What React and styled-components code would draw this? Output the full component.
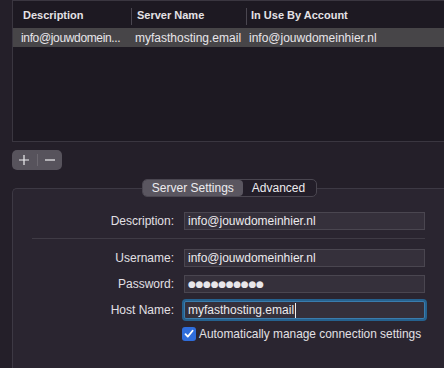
import React from "react"
import styled, { createGlobalStyle } from "styled-components"

const GlobalStyle = createGlobalStyle`
	html, body {
		margin: 0;
		padding: 0;
		background: #241f29;
		font-family: "Liberation Sans", Arial, sans-serif;
		font-size: 12px;
		color: #e2e0e4;
	}
	#root {
		width: 444px;
		height: 368px;
		overflow: hidden;
	}
`

const Page = styled.div`
	height: 368px;
	padding-left: 12px;
	display: flex;
	flex-direction: column;
	box-sizing: border-box;
`

const Table = styled.div`
	height: 142px;
	box-sizing: border-box;
	background: #1d1922;
	border: 1px solid #3a3640;
	border-right: none;
`

const Row = styled.div`
	display: grid;
	grid-template-columns: 118px 115px 1fr;
	height: ${(p) => (p.header ? "27px" : "19px")};
	align-items: center;
	background: ${(p) => (p.selected ? "#474548" : "transparent")};
	font-size: ${(p) => (p.header ? "11px" : "12px")};
	font-weight: ${(p) => (p.header ? "bold" : "normal")};
`

const Cell = styled.div`
	position: relative;
	padding-left: ${(p) => p.pad}px;
	white-space: nowrap;
	letter-spacing: ${(p) => (p.tight ? "-0.35px" : "normal")};
	color: ${(p) => (p.header ? "#e4e2e6" : "#e8e6ea")};
	${(p) =>
		p.sep &&
		`
		&::before {
			content: "";
			position: absolute;
			left: 0;
			top: -1px;
			height: 17px;
			width: 1px;
			background: #4a4650;
		}
	`}
`

const ButtonGroup = styled.div`
	margin-top: 8px;
	width: 50px;
	height: 20px;
	border-radius: 5px;
	background: #57535c;
	display: flex;
	align-items: center;
`

const SmallButton = styled.div`
	flex: 1;
	height: 20px;
	display: flex;
	align-items: center;
	justify-content: center;
	& + & {
		border-left: 1px solid #6c6870;
		height: 12px;
	}
`

const Tabs = styled.div`
	margin-top: 9px;
	align-self: center;
	display: flex;
	height: 18px;
	box-sizing: border-box;
	border: 1px solid #4a4650;
	border-radius: 5px;
	background: #231e29;
	position: relative;
	z-index: 1;
	margin-bottom: -9px;
	margin-left: 3px;
`

const Tab = styled.div`
	padding: 0 ${(p) => (p.active ? "9px" : "11px")} 0 9px;
	display: flex;
	align-items: center;
	border-radius: 4px;
	background: ${(p) => (p.active ? "#5a5660" : "transparent")};
	color: #ecebee;
	font-size: 12px;
`

const Panel = styled.div`
	flex: 1;
	background: #2a2530;
	border: 1px solid #3d3944;
	border-right: none;
	border-bottom: none;
	border-top-left-radius: 5px;
	padding-top: 23px;
`

const FormRow = styled.div`
	display: grid;
	grid-template-columns: 161px 241px;
	column-gap: 10px;
	align-items: center;
	height: 18px;
	margin-bottom: 8px;
`

const Label = styled.div`
	text-align: right;
	color: #e2e0e5;
`

const Input = styled.div`
	height: 18px;
	box-sizing: border-box;
	background: #35303b;
	border: 1px solid ${(p) => (p.focus ? "#3a7cad" : "#4a4650")};
	box-shadow: ${(p) => (p.focus ? "0 0 0 2px #25618e" : "none")};
	border-radius: ${(p) => (p.focus ? "2px" : "0")};
	padding-left: 3px;
	display: flex;
	align-items: center;
	color: #ecebee;
	white-space: nowrap;
`

const Dots = styled.span`
	font-family: "DejaVu Sans", sans-serif;
	font-size: 9px;
	letter-spacing: -0.3px;
	color: #e8e6ea;
`

const Caret = styled.span`
	width: 1px;
	height: 15px;
	background: #f0f0f0;
	margin-left: 1px;
`

const Divider = styled.div`
	margin: 0 19px 10px 19px;
	height: 1px;
	background: #3f3b45;
`

const CheckRow = styled.div`
	display: flex;
	align-items: center;
	margin-left: 169px;
	margin-top: 1px;
	gap: 3px;
	font-size: 11.9px;
`

const Checkbox = styled.div`
	width: 14px;
	height: 14px;
	border-radius: 3px;
	background: #2f6ddb;
	display: flex;
	align-items: center;
	justify-content: center;
`

const data = {
	description: "info@jouwdomeinhier.nl",
	server: "myfasthosting.email",
	account: "info@jouwdomeinhier.nl",
}

const App = () => (
	<>
		<GlobalStyle />
		<Page>
			<Table>
				<Row header>
					<Cell header pad={10}>Description</Cell>
					<Cell header sep pad={6}>Server Name</Cell>
					<Cell header sep pad={5}>In Use By Account</Cell>
				</Row>
				<Row selected>
					<Cell pad={8} tight>info@jouwdomein...</Cell>
					<Cell pad={4}>{data.server}</Cell>
					<Cell pad={3}>{data.account}</Cell>
				</Row>
			</Table>

			<ButtonGroup>
				<SmallButton>
					<svg width="12" height="12" viewBox="0 0 12 12">
						<path d="M6 1v10M1 6h10" stroke="#eeeef0" strokeWidth="1.2" />
					</svg>
				</SmallButton>
				<SmallButton>
					<svg width="12" height="12" viewBox="0 0 12 12">
						<path d="M1 6h10" stroke="#eeeef0" strokeWidth="1.2" />
					</svg>
				</SmallButton>
			</ButtonGroup>

			<Tabs>
				<Tab active>Server Settings</Tab>
				<Tab>Advanced</Tab>
			</Tabs>

			<Panel>
				<FormRow>
					<Label>Description:</Label>
					<Input>{data.description}</Input>
				</FormRow>
				<Divider />
				<FormRow>
					<Label>Username:</Label>
					<Input>{data.account}</Input>
				</FormRow>
				<FormRow>
					<Label>Password:</Label>
					<Input>
						<Dots>●●●●●●●●●●</Dots>
					</Input>
				</FormRow>
				<FormRow>
					<Label>Host Name:</Label>
					<Input focus>
						{data.server}
						<Caret />
					</Input>
				</FormRow>
				<CheckRow>
					<Checkbox>
						<svg width="10" height="10" viewBox="0 0 10 10">
							<path
								d="M1.5 5.2l2.3 2.4L8.6 1.8"
								stroke="#fff"
								strokeWidth="1.8"
								fill="none"
								strokeLinecap="round"
								strokeLinejoin="round"
							/>
						</svg>
					</Checkbox>
					<span>Automatically manage connection settings</span>
				</CheckRow>
			</Panel>
		</Page>
	</>
)

export default App
